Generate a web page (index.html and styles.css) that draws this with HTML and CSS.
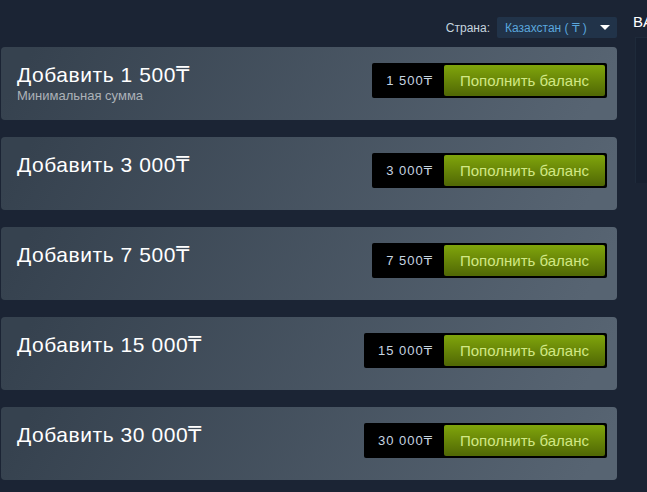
FILE: index.html
```html
<!DOCTYPE html>
<html lang="ru">
<head>
<meta charset="utf-8">
<title>Пополнение кошелька</title>
<link rel="stylesheet" href="styles.css">
</head>
<body>
<div class="page">
  <div class="main">
    <div class="country-row">
      <span class="country-label">Страна:</span>
      <div class="select">
        <span class="select-text">Казахстан ( ₸ )</span>
        <svg class="select-arrow" width="10" height="5" viewBox="0 0 10 5"><path d="M0 0H10L5 5Z" fill="#fff"/></svg>
      </div>
    </div>

    <div class="card">
      <div class="card-info">
        <div class="card-title">Добавить 1 500₸</div>
        <div class="card-sub">Минимальная сумма</div>
      </div>
      <div class="action">
        <span class="price">1 500₸</span>
        <a class="btn">Пополнить баланс</a>
      </div>
    </div>

    <div class="card">
      <div class="card-info">
        <div class="card-title">Добавить 3 000₸</div>
      </div>
      <div class="action">
        <span class="price">3 000₸</span>
        <a class="btn">Пополнить баланс</a>
      </div>
    </div>

    <div class="card">
      <div class="card-info">
        <div class="card-title">Добавить 7 500₸</div>
      </div>
      <div class="action">
        <span class="price">7 500₸</span>
        <a class="btn">Пополнить баланс</a>
      </div>
    </div>

    <div class="card">
      <div class="card-info">
        <div class="card-title">Добавить 15 000₸</div>
      </div>
      <div class="action">
        <span class="price">15 000₸</span>
        <a class="btn">Пополнить баланс</a>
      </div>
    </div>

    <div class="card">
      <div class="card-info">
        <div class="card-title">Добавить 30 000₸</div>
      </div>
      <div class="action">
        <span class="price">30 000₸</span>
        <a class="btn">Пополнить баланс</a>
      </div>
    </div>
  </div>

  <div class="side">
    <h2 class="side-title">ВАШ АККАУНТ STEAM</h2>
    <div class="side-box"></div>
  </div>
</div>
</body>
</html>
```

FILE: styles.css
```css
html, body {
  margin: 0;
  padding: 0;
  background: #1b2434;
  overflow: hidden;
}
body {
  font-family: "Liberation Sans", Arial, "DejaVu Sans", sans-serif;
  width: 647px;
  height: 492px;
}
.page {
  display: flex;
  padding-left: 1px;
  gap: 16px;
}
.main {
  width: 616px;
  flex: none;
  padding-top: 17px;
  display: flex;
  flex-direction: column;
  gap: 17px;
}
.country-row {
  display: flex;
  justify-content: flex-end;
  align-items: center;
  gap: 7px;
  height: 21px;
  margin-bottom: -8px;
}
.country-label {
  font-size: 12px;
  color: #c6d4df;
}
.select {
  width: 120px;
  height: 21px;
  box-sizing: border-box;
  padding: 0 7px 0 8px;
  background: #213349;
  border-radius: 2px;
  display: flex;
  align-items: center;
  justify-content: space-between;
}
.select-text {
  font-size: 12px;
  color: #5aa6dc;
}
.select-arrow {
  display: block;
}
.card {
  height: 73px;
  box-sizing: border-box;
  padding: 15px 10px 0 16px;
  border-radius: 4px;
  background: linear-gradient(-60deg, #576472 5%, #36424f 95%);
  display: flex;
  justify-content: space-between;
  align-items: flex-start;
}
.card-title {
  font-size: 21px;
  line-height: 26px;
  letter-spacing: 0.55px;
  color: #ffffff;
}
.card-sub {
  font-size: 13px;
  line-height: 16px;
  color: #acb2b8;
}
.action {
  margin-top: 1px;
  background: #000000;
  border-radius: 2px;
  padding: 2px;
  display: flex;
  align-items: center;
}
.price {
  font-size: 13px;
  color: #c7d5e0;
  padding: 0 11px 0 12px;
  letter-spacing: 1px;
}
.btn {
  height: 31px;
  box-sizing: border-box;
  padding: 0 16px;
  display: flex;
  align-items: center;
  font-size: 15px;
  color: #d2e885;
  border-radius: 2px;
  background: linear-gradient(to bottom, #7ea20b 5%, #526a05 95%);
}
.side {
  flex: 1;
  min-width: 0;
  overflow: hidden;
}
.side-title {
  margin: 13px 0 0 0;
  font-size: 15px;
  line-height: 17px;
  font-weight: normal;
  color: #ffffff;
  white-space: nowrap;
  letter-spacing: 0.5px;
}
.side-box {
  margin: 7px 0 0 2px;
  height: 145px;
  background: #172030;
  border-left: 1px solid #1e2a3a;
  border-top: 1px solid #1e2a3a;
}
```
